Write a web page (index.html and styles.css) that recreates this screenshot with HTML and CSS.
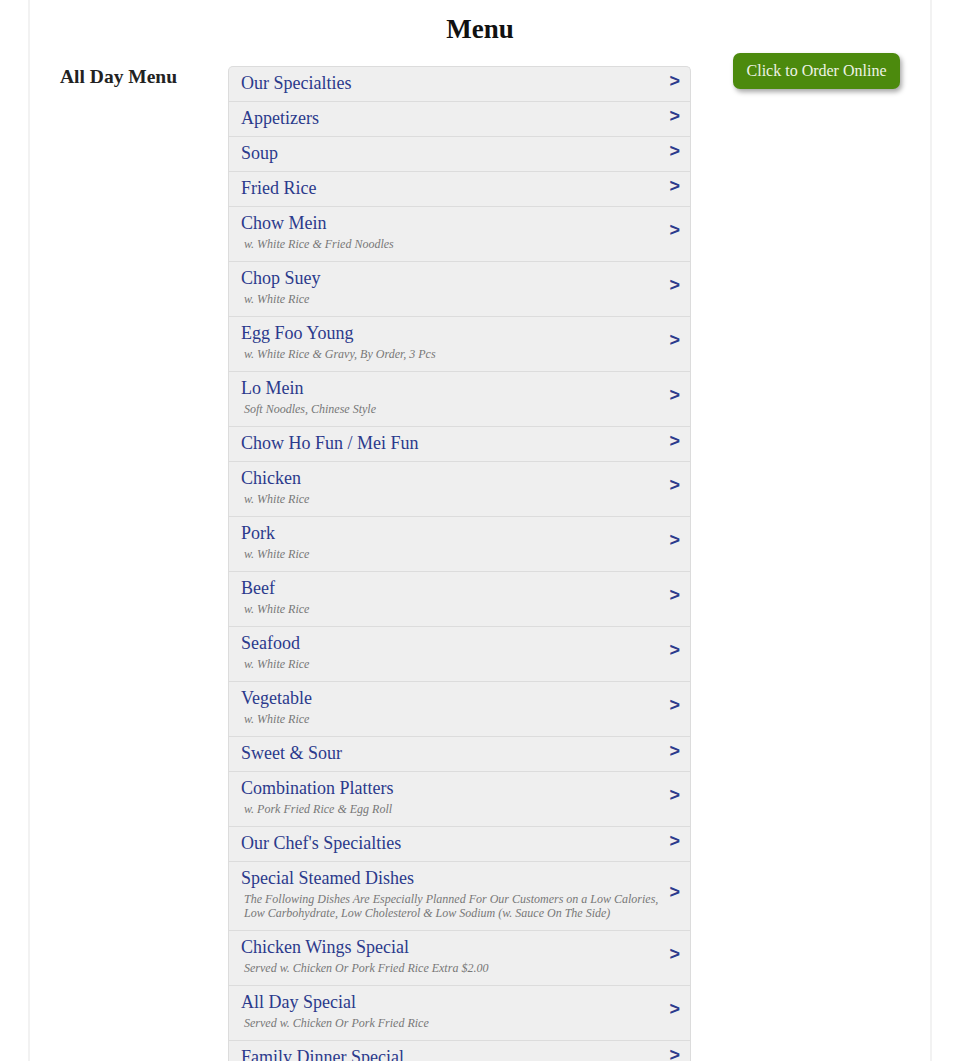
FILE: index.html
```html
<!DOCTYPE html>
<html>
<head>
<meta charset="utf-8">
<link rel="stylesheet" href="styles.css">
</head>
<body>
<div class="page">
  <h1 class="title">Menu</h1>
  <div class="layout">
    <div class="side"><h2 class="side-title">All Day Menu</h2></div>
    <ul class="menu">
      <li class="row"><div class="txt"><div class="name">Our Specialties</div></div><span class="arrow">&gt;</span></li>
      <li class="row"><div class="txt"><div class="name">Appetizers</div></div><span class="arrow">&gt;</span></li>
      <li class="row"><div class="txt"><div class="name">Soup</div></div><span class="arrow">&gt;</span></li>
      <li class="row"><div class="txt"><div class="name">Fried Rice</div></div><span class="arrow">&gt;</span></li>
      <li class="row"><div class="txt"><div class="name">Chow Mein</div><div class="desc">w. White Rice &amp; Fried Noodles</div></div><span class="arrow">&gt;</span></li>
      <li class="row"><div class="txt"><div class="name">Chop Suey</div><div class="desc">w. White Rice</div></div><span class="arrow">&gt;</span></li>
      <li class="row"><div class="txt"><div class="name">Egg Foo Young</div><div class="desc">w. White Rice &amp; Gravy, By Order, 3 Pcs</div></div><span class="arrow">&gt;</span></li>
      <li class="row"><div class="txt"><div class="name">Lo Mein</div><div class="desc">Soft Noodles, Chinese Style</div></div><span class="arrow">&gt;</span></li>
      <li class="row"><div class="txt"><div class="name">Chow Ho Fun / Mei Fun</div></div><span class="arrow">&gt;</span></li>
      <li class="row"><div class="txt"><div class="name">Chicken</div><div class="desc">w. White Rice</div></div><span class="arrow">&gt;</span></li>
      <li class="row"><div class="txt"><div class="name">Pork</div><div class="desc">w. White Rice</div></div><span class="arrow">&gt;</span></li>
      <li class="row"><div class="txt"><div class="name">Beef</div><div class="desc">w. White Rice</div></div><span class="arrow">&gt;</span></li>
      <li class="row"><div class="txt"><div class="name">Seafood</div><div class="desc">w. White Rice</div></div><span class="arrow">&gt;</span></li>
      <li class="row"><div class="txt"><div class="name">Vegetable</div><div class="desc">w. White Rice</div></div><span class="arrow">&gt;</span></li>
      <li class="row"><div class="txt"><div class="name">Sweet &amp; Sour</div></div><span class="arrow">&gt;</span></li>
      <li class="row"><div class="txt"><div class="name">Combination Platters</div><div class="desc">w. Pork Fried Rice &amp; Egg Roll</div></div><span class="arrow">&gt;</span></li>
      <li class="row"><div class="txt"><div class="name">Our Chef's Specialties</div></div><span class="arrow">&gt;</span></li>
      <li class="row"><div class="txt"><div class="name">Special Steamed Dishes</div><div class="desc">The Following Dishes Are Especially Planned For Our Customers on a Low Calories, Low Carbohydrate, Low Cholesterol &amp; Low Sodium (w. Sauce On The Side)</div></div><span class="arrow">&gt;</span></li>
      <li class="row"><div class="txt"><div class="name">Chicken Wings Special</div><div class="desc">Served w. Chicken Or Pork Fried Rice Extra $2.00</div></div><span class="arrow">&gt;</span></li>
      <li class="row"><div class="txt"><div class="name">All Day Special</div><div class="desc">Served w. Chicken Or Pork Fried Rice</div></div><span class="arrow">&gt;</span></li>
      <li class="row"><div class="txt"><div class="name">Family Dinner Special</div></div><span class="arrow">&gt;</span></li>
    </ul>
    <div class="aside"><a class="order" href="#">Click to Order Online</a></div>
  </div>
</div>
</body>
</html>
```
FILE: styles.css
```css
html, body {
  margin: 0;
  padding: 0;
  background: #fff;
}
body {
  font-family: "Liberation Serif", "Times New Roman", serif;
  color: #222;
}
.page {
  margin: 0 28px;
  border-left: 2px solid #f2f2f2;
  border-right: 2px solid #f2f2f2;
  min-height: 1061px;
  padding: 0 30px;
}
.title {
  margin: 0;
  padding-top: 12px;
  font-size: 27px;
  line-height: 34px;
  text-align: center;
  font-weight: bold;
  color: #111;
}
.layout {
  display: grid;
  grid-template-columns: 168px 463px 1fr;
  margin-top: 20px;
}
.side-title {
  margin: 0;
  font-size: 19.5px;
  line-height: 22px;
  font-weight: bold;
  color: #222;
}
.menu {
  list-style: none;
  margin: 0;
  padding: 0;
  border: 1px solid #dcdcdc;
  border-bottom: none;
  border-radius: 5px 5px 0 0;
  background: #efefef;
  overflow: hidden;
}
.row {
  display: flex;
  align-items: center;
  padding: 5px 10px 7px 12px;
  border-bottom: 1px solid #dcdcdc;
}
.row:has(.desc) {
  padding-bottom: 10px;
}
.txt {
  flex: 1;
}
.name {
  font-size: 18px;
  line-height: 22px;
  color: #2b3a8c;
}
.desc {
  margin: 3px 0 0 3px;
  font-size: 12px;
  line-height: 14px;
  font-style: italic;
  color: #777;
}
.arrow {
  font-family: "Liberation Sans", Arial, sans-serif;
  font-weight: bold;
  font-size: 18px;
  line-height: 18px;
  color: #2b3a8c;
  margin-left: 8px;
  transform: translateY(-2px);
}
.aside {
  display: flex;
  justify-content: flex-end;
  align-items: flex-start;
}
.order {
  margin-top: -13px;
  display: inline-block;
  width: 167px;
  box-sizing: border-box;
  text-align: center;
  padding: 8px 0 9px;
  background: #4c8a0d;
  color: #eef3e6;
  font-size: 16px;
  line-height: 19px;
  border-radius: 7px;
  text-decoration: none;
  box-shadow: 2px 3px 5px rgba(0, 0, 0, 0.35);
}
```
